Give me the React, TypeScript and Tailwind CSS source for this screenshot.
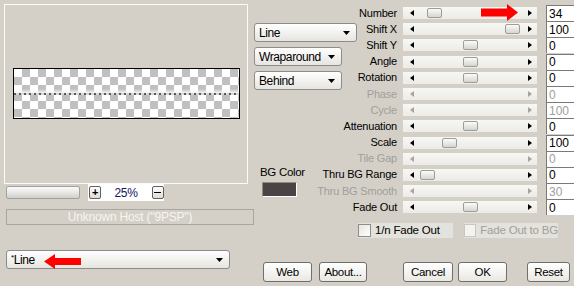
import React from "react";

type Param = { label: string; value: string; thumb: number | null };

const params: Param[] = [
  { label: "Number", value: "34", thumb: 24 },
  { label: "Shift X", value: "100", thumb: 102 },
  { label: "Shift Y", value: "0", thumb: 60 },
  { label: "Angle", value: "0", thumb: 60 },
  { label: "Rotation", value: "0", thumb: 60 },
  { label: "Phase", value: "0", thumb: null },
  { label: "Cycle", value: "100", thumb: null },
  { label: "Attenuation", value: "0", thumb: 60 },
  { label: "Scale", value: "100", thumb: 39 },
  { label: "Tile Gap", value: "0", thumb: null },
  { label: "Thru BG Range", value: "0", thumb: 17 },
  { label: "Thru BG Smooth", value: "30", thumb: null },
  { label: "Fade Out", value: "0", thumb: 60 },
];

function DownArrow() {
  return (
    <svg width="7" height="4" viewBox="0 0 7 4" className="shrink-0">
      <polygon points="0,0 7,0 3.5,4" fill="#000" />
    </svg>
  );
}

function Dropdown({ label, w }: { label: React.ReactNode; w: string }) {
  return (
    <div
      className={`${w} h-[19px] flex items-center justify-between pl-[4px] pr-[6px] rounded-[3px] border border-[#8c8c88] bg-gradient-to-b from-white to-[#e6e5e0] text-[12px] tracking-[-0.4px] text-black`}
    >
      <span className="leading-none">{label}</span>
      <DownArrow />
    </div>
  );
}

function Button({ label, w, ml }: { label: string; w: string; ml: string }) {
  return (
    <div
      className={`${w} ${ml} h-[20px] flex items-center justify-center rounded-[3px] border border-[#6f6f6c] bg-gradient-to-b from-white to-[#e9e8e3] text-[11.5px] tracking-[-0.3px] text-black`}
    >
      {label}
    </div>
  );
}

function ParamRow({ p }: { p: Param }) {
  const enabled = p.thumb !== null;
  return (
    <div className="flex items-center h-[16.2px]">
      <div
        className={`w-[40px] flex justify-end whitespace-nowrap text-[11px] tracking-[-0.2px] leading-none ${
          enabled ? "text-black" : "text-[#a19f99]"
        }`}
      >
        {p.label}
      </div>
      <div className="relative ml-[6px] w-[134px] h-[12px] bg-gradient-to-b from-[#f7f7f4] to-[#ecebe6]">
        {/* scroll arrows */}
        <svg width="4" height="6" viewBox="0 0 4 6" className="absolute left-[7px] top-[3px]">
          <polygon points="4,0 4,6 0,3" fill={enabled ? "#000" : "#a6a49f"} />
        </svg>
        <svg width="4" height="6" viewBox="0 0 4 6" className="absolute left-[125px] top-[3px]">
          <polygon points="0,0 0,6 4,3" fill={enabled ? "#000" : "#a6a49f"} />
        </svg>
        {enabled && (
          <div
            className="absolute top-[1px] w-[15px] h-[10px] rounded-[2px] border border-[#9d9d99] bg-gradient-to-b from-[#fbfbfa] to-[#d6d5d0]"
            style={{ left: p.thumb as number }}
          />
        )}
      </div>
      <div
        className={`ml-[9px] w-[30px] h-[16px] shrink-0 bg-white border-t border-l border-[#7a7a76] pl-[2px] flex items-center text-[12px] leading-none ${
          enabled ? "text-black" : "text-[#a19f99]"
        }`}
      >
        {p.value}
      </div>
    </div>
  );
}

export default function App() {
  return (
    <div className="relative w-[574px] h-[286px] overflow-hidden flex bg-[#d4d0c8] font-['Liberation_Sans',Arial,sans-serif]">
      {/* Left column: preview */}
      <div className="w-[254px] shrink-0 flex flex-col pl-[4px] pt-[4px]">
        <div className="w-[244px] h-[180px] border border-[#fbfbf9] pl-[8px] pt-[63px]">
          <div className="relative w-[227px] h-[51px] border border-black bg-[conic-gradient(#c0c0c0_25%,#fff_0_50%,#c0c0c0_0_75%,#fff_0)] bg-[length:16px_16px]">
            <div className="absolute left-0 right-0 top-[20px] h-[4px] bg-gradient-to-b from-transparent to-[#f4f4f4]" />
            <div className="absolute left-0 right-0 top-[24px] h-[2px] bg-[repeating-linear-gradient(90deg,#5a5a5a_0_2px,#d8d8d8_2px_5px)]" />
          </div>
        </div>

        {/* zoom controls */}
        <div className="flex items-center h-[17px]">
          <div className="ml-[2px] w-[74px] h-[13px] rounded-[2px] border border-[#a3a29d] bg-gradient-to-b from-[#fafafa] via-[#e8e8e6] to-[#cfcfcb]" />
          <div className="ml-[8px] w-[76px] h-[17px] bg-white flex items-center">
            <div className="ml-[1px] w-[13px] h-[13px] rounded-[2px] border border-[#5f5f5c] bg-gradient-to-b from-white to-[#dcdbd6] flex items-center justify-center text-[11px] leading-none font-bold text-black">
              +
            </div>
            <span className="ml-[13px] text-[12px] tracking-[-0.3px] leading-none text-[#14145a]">25%</span>
            <div className="ml-[14px] w-[13px] h-[13px] rounded-[2px] border border-[#5f5f5c] bg-gradient-to-b from-white to-[#dcdbd6] flex items-center justify-center">
              <div className="w-[7px] h-[1px] bg-black" />
            </div>
          </div>
        </div>

        <div className="mt-[8px] ml-[2px] w-[248px] h-[16px] border border-[#a9a6a0] flex items-center justify-center text-[12px] tracking-[-0.2px] leading-none text-[#f6f5f2]">
          Unknown Host ("9PSP")
        </div>

        <div className="mt-[25px] ml-[2px]">
          <Dropdown
            w="w-[224px]"
            label={
              <span>
                <span className="text-[8px] align-top">*</span>Line
              </span>
            }
          />
        </div>
      </div>

      {/* Right area */}
      <div className="flex-1 flex flex-col">
        <div className="flex">
          {/* Mode selects and background colour */}
          <div className="w-[103px] shrink-0 flex flex-col pt-[23px]">
            <Dropdown w="w-[103px]" label="Line" />
            <div className="mt-[5px]">
              <Dropdown w="w-[88px]" label="Wraparound" />
            </div>
            <div className="mt-[5px]">
              <Dropdown w="w-[88px]" label="Behind" />
            </div>
            <div className="mt-[75px] ml-[6px] text-[11.5px] tracking-[-0.3px] leading-[14px] text-black">BG Color</div>
            <div className="mt-[3px] ml-[8px] w-[35px] h-[15px] bg-[#4a4444] border-t border-l border-[#8e8b85] border-r border-b border-r-white border-b-white" />
          </div>

          {/* Parameter sliders */}
          <div className="flex flex-col pt-[5px]">
            {params.map((p) => (
              <ParamRow key={p.label} p={p} />
            ))}
            <div className="mt-[8px] flex items-center h-[15px] text-[11.5px] tracking-[-0.2px] leading-none whitespace-nowrap">
              <div className="ml-[1px] w-[95px] h-[15px] bg-[#e4e2dc] flex items-center">
                <div className="w-[13px] h-[13px] border border-[#8e8d89] bg-gradient-to-br from-[#e6e5e1] to-white" />
                <span className="ml-[4px] text-black">1/n Fade Out</span>
              </div>
              <div className="ml-[11px] w-[94px] h-[15px] bg-[#e4e2dc] flex items-center">
                <div className="w-[13px] h-[13px] border border-[#c9c7c1] bg-[#f4f3ef]" />
                <span className="ml-[4px] text-[#a19f99]">Fade Out to BG</span>
              </div>
            </div>
          </div>
        </div>

        {/* Dialog buttons */}
        <div className="mt-[24px] flex">
          <Button label="Web" w="w-[49px]" ml="ml-[9px]" />
          <Button label="About..." w="w-[48px]" ml="ml-[7px]" />
          <Button label="Cancel" w="w-[50px]" ml="ml-[36px]" />
          <Button label="OK" w="w-[49px]" ml="ml-[5px]" />
          <Button label="Reset" w="w-[43px]" ml="ml-[20px]" />
        </div>
      </div>

      {/* Red annotation arrows */}
      <svg width="38" height="17" viewBox="0 0 38 17" className="absolute left-[481px] top-[4px]">
        <polygon points="0,4.5 26,4.5 26,0 37,8.5 26,17 26,12.5 0,12.5" fill="#ff0000" />
      </svg>
      <svg width="38" height="15" viewBox="0 0 38 15" className="absolute left-[44px] top-[254px]">
        <polygon points="0,7.5 11,0 11,4 37,4 37,11 11,11 11,15" fill="#ff0000" />
      </svg>
    </div>
  );
}
